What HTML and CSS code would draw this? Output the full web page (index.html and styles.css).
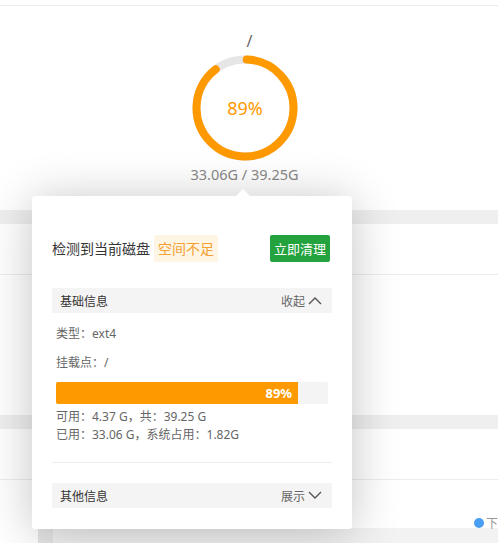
FILE: index.html
```html
<!DOCTYPE html>
<html lang="zh-CN">
<head>
    <meta charset="UTF-8">
    <meta name="viewport" content="width=device-width, initial-scale=1.0">
    <title>磁盘</title>
    <link rel="stylesheet" href="styles.css">
</head>
<body>
    <div class="page">
        <div class="top-bar"></div>

        <div class="disk">
            <div class="disk-path">/</div>
            <div class="ring">
                <svg width="114" height="114" viewBox="0 0 114 114">
                    <circle cx="57" cy="57" r="48.5" fill="none" stroke="#e6e6e6" stroke-width="8"/>
                    <circle cx="57" cy="57" r="48.5" fill="none" stroke="#ff9900" stroke-width="8"
                            stroke-linecap="round" stroke-dasharray="271.2 400"
                            transform="rotate(-88 57 57)"/>
                </svg>
                <span class="ring-value">89%</span>
            </div>
            <div class="disk-size">33.06G / 39.25G</div>
        </div>

        <div class="band"></div>
        <div class="row"></div>
        <div class="area"></div>
        <div class="band"></div>
        <div class="row"></div>
        <div class="row last">
            <span class="hidden-label">盘符</span>
            <span class="legend"><i></i>下</span>
        </div>
        <div class="footer-panel"><div class="footer-side"></div></div>

        <div class="popover">
            <div class="alert">
                <span class="alert-text">检测到当前磁盘</span>
                <span class="tag">空间不足</span>
                <button class="btn-clean">立即清理</button>
            </div>

            <div class="section-head">
                <span>基础信息</span>
                <span class="toggle">收起
                    <svg width="14" height="9" viewBox="0 0 14 9"><path d="M1 8 L7 2 L13 8" fill="none" stroke="#555" stroke-width="1.4"/></svg>
                </span>
            </div>

            <div class="info">类型：ext4</div>
            <div class="info mount">挂载点：/</div>

            <div class="usage-bar">
                <div class="usage-fill" style="width: 89%">89%</div>
            </div>
            <div class="usage-text">
                <div>可用：4.37 G，共：39.25 G</div>
                <div>已用：33.06 G，系统占用：1.82G</div>
            </div>

            <div class="divider"></div>

            <div class="section-head other">
                <span>其他信息</span>
                <span class="toggle">展示
                    <svg width="14" height="9" viewBox="0 0 14 9"><path d="M1 1 L7 7 L13 1" fill="none" stroke="#555" stroke-width="1.4"/></svg>
                </span>
            </div>
        </div>
    </div>
</body>
</html>
```

FILE: styles.css
```css
* {
    box-sizing: border-box;
}
body {
    margin: 0;
    background: #fff;
    font-family: "Noto Sans", "Noto Sans CJK SC", sans-serif;
    color: #333;
    overflow: hidden;
}
.page {
    position: relative;
    height: 543px;
}
.top-bar {
    height: 6px;
    border-bottom: 1px solid #ececec;
}
.disk {
    padding: 25px 0 27px;
    text-align: center;
}
.disk-path {
    height: 20px;
    line-height: 20px;
    font-size: 16px;
    color: #666;
    padding-left: 1px;
}
.ring {
    position: relative;
    width: 114px;
    height: 114px;
    margin: 0 auto;
    left: -4px;
}
.ring svg {
    display: block;
}
.ring-value {
    position: absolute;
    left: 0;
    right: 0;
    top: 45px;
    line-height: 24px;
    font-size: 18px;
    color: #ff9900;
}
.disk-size {
    height: 18px;
    line-height: 18px;
    font-size: 14.5px;
    color: #888;
    margin-left: -9px;
}
.band {
    height: 14px;
    background: #efefef;
}
.row {
    height: 51px;
    border-bottom: 1px solid #ececec;
}
.area {
    height: 140px;
}
.row.last {
    height: 48px;
    border-bottom: none;
    position: relative;
    font-size: 12px;
}
.hidden-label {
    position: absolute;
    left: 193px;
    top: 32px;
    color: #666;
    font-size: 13px;
}
.legend {
    position: absolute;
    left: 474px;
    top: 34px;
    display: flex;
    align-items: center;
    color: #999;
    white-space: nowrap;
}
.legend i {
    width: 10px;
    height: 10px;
    border-radius: 50%;
    background: #4a9ff5;
    margin-right: 2px;
}
.footer-panel {
    height: 20px;
    margin-left: 38px;
    background: #f2f2f2;
}
.footer-side {
    width: 15px;
    height: 100%;
    background: #e6e6e6;
}

/* popover over the disk card */
.popover {
    position: absolute;
    left: 32px;
    top: 196px;
    width: 320px;
    padding: 38px 20px 21px;
    background: #fff;
    border-radius: 3px;
    box-shadow: 0 4px 48px rgba(0, 0, 0, 0.24);
}
.popover::before {
    content: "";
    position: absolute;
    top: -7px;
    left: 204px;
    border-left: 7px solid transparent;
    border-right: 7px solid transparent;
    border-bottom: 7px solid #fff;
}
.alert {
    display: flex;
    align-items: center;
    height: 28px;
}
.alert-text {
    font-size: 14px;
    color: #333;
}
.tag {
    margin-left: 4px;
    padding: 0 4px;
    height: 27px;
    line-height: 27px;
    font-size: 14px;
    color: #f5a030;
    background: #fff5e4;
    border-radius: 2px;
}
.btn-clean {
    margin-left: auto;
    margin-right: 2px;
    width: 60px;
    height: 27px;
    padding: 0;
    border: none;
    border-radius: 2px;
    background: #23a23d;
    color: #fff;
    font-family: inherit;
    font-size: 13px;
}
.section-head {
    display: flex;
    justify-content: space-between;
    align-items: center;
    height: 25px;
    margin-top: 26px;
    padding: 0 10px 0 8px;
    background: #f4f4f4;
    font-size: 12px;
    color: #333;
}
.section-head.other {
    margin-top: 20px;
}
.toggle {
    display: flex;
    align-items: center;
    gap: 3px;
    color: #666;
}
.info {
    margin-top: 12px;
    padding-left: 4px;
    line-height: 18px;
    font-size: 12px;
    color: #666;
}
.info.mount {
    margin-top: 11px;
}
.usage-bar {
    margin: 10px 4px 0;
    height: 22px;
    background: #f4f4f4;
    border-radius: 2px;
}
.usage-fill {
    height: 100%;
    background: #ff9900;
    border-radius: 2px 0 0 2px;
    text-align: right;
    padding-right: 6px;
    line-height: 22px;
    font-size: 13px;
    font-weight: bold;
    color: #fff;
}
.usage-text {
    margin-top: 4px;
    padding-left: 4px;
    line-height: 18px;
    font-size: 12px;
    color: #666;
}
.divider {
    margin-top: 18px;
    border-top: 1px solid #ececec;
}
```
